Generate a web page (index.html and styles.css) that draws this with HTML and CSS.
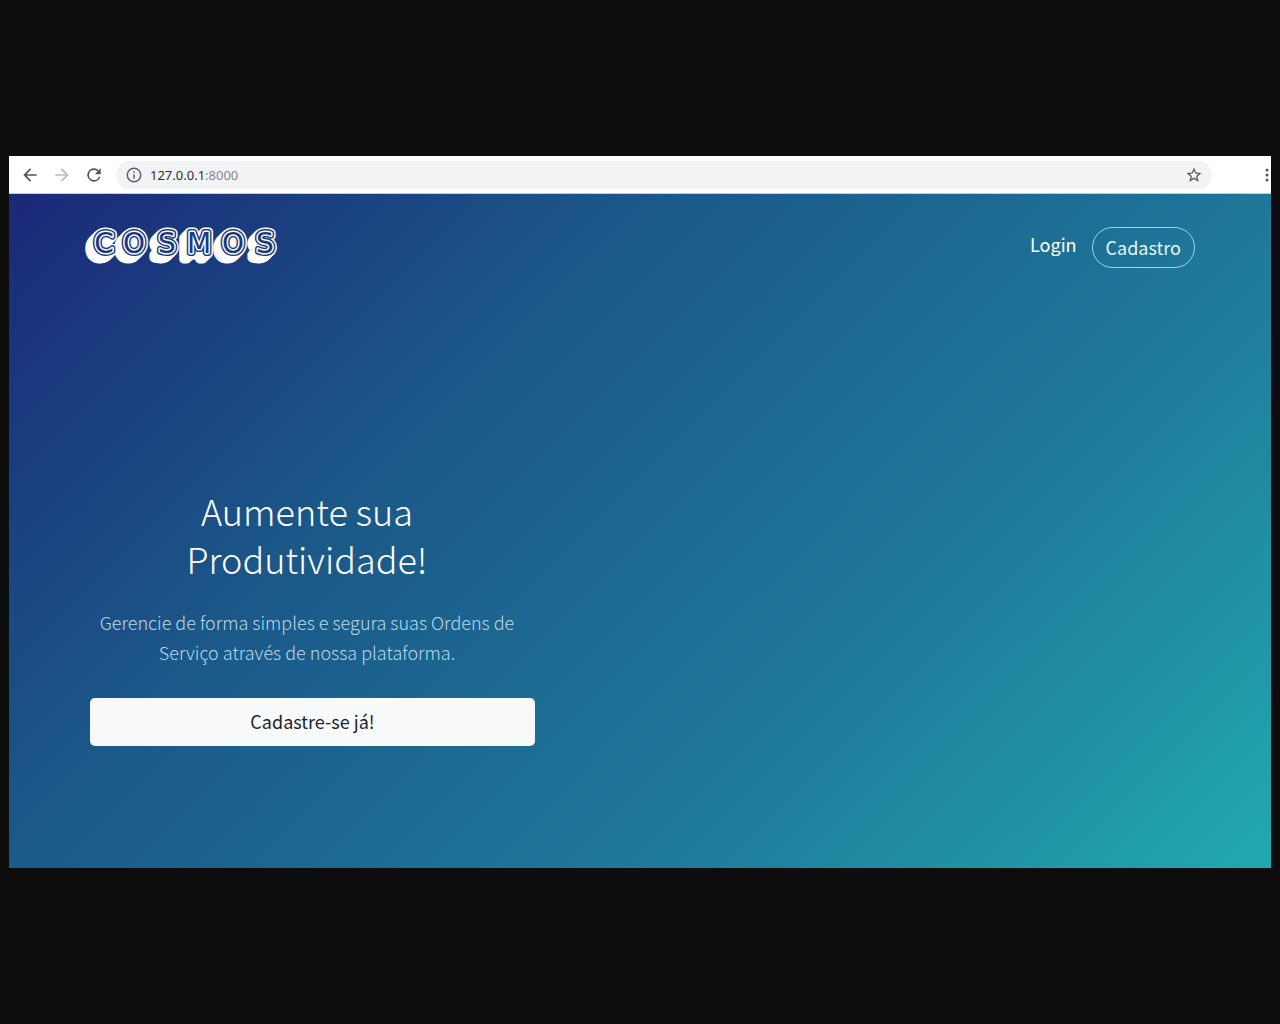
FILE: index.html
```html
<!DOCTYPE html>
<html lang="pt-BR">
<head>
<meta charset="utf-8">
<meta name="viewport" content="width=device-width, initial-scale=1">
<title>Cosmos</title>
<link rel="stylesheet" href="styles.css">
</head>
<body>
<div class="browser">
  <div class="toolbar">
    <button class="tool" type="button" aria-label="Voltar"><svg viewBox="0 0 24 24"><path d="M20 11H7.800l5.600-5.600L12 4l-8 8 8 8 1.400-1.400L7.800 13H20z"/></svg></button>
    <button class="tool tool-off" type="button" aria-label="Avançar"><svg viewBox="0 0 24 24"><path d="M4 11h12.200l-5.600-5.600L12 4l8 8-8 8-1.400-1.400 5.600-5.600H4z"/></svg></button>
    <button class="tool" type="button" aria-label="Recarregar"><svg viewBox="0 0 24 24"><path d="M17.650 6.350A8 8 0 1 0 19.730 14h-2.080A6 6 0 1 1 12 6c1.660 0 3.140.69 4.220 1.780L13 11h7V4z"/></svg></button>
    <div class="address">
      <svg class="info" viewBox="0 0 24 24"><path d="M11 7h2v2h-2zm0 4h2v6h-2zm1-9a10 10 0 1 0 0 20 10 10 0 0 0 0-20zm0 18a8 8 0 1 1 0-16 8 8 0 0 1 0 16z"/></svg>
      <span class="url">127.0.0.1<span class="port">:8000</span></span>
      <button class="tool star" type="button" aria-label="Favoritar"><svg viewBox="0 0 24 24"><path d="M22 9.240l-7.190-.62L12 2 9.190 8.630 2 9.240l5.460 4.730L5.820 21 12 17.270 18.180 21l-1.630-7.030zM12 15.400l-3.760 2.270 1-4.280-3.320-2.880 4.380-.38L12 6.100l1.710 4.040 4.380.38-3.320 2.880 1 4.280z"/></svg></button>
    </div>
    <button class="menu" type="button" aria-label="Menu"><svg viewBox="0 0 4 16"><circle cx="2" cy="3" r="1.500"/><circle cx="2" cy="8" r="1.500"/><circle cx="2" cy="13" r="1.500"/></svg></button>
  </div>
  <div class="page">
    <header class="header">
      <a class="logo" href="#" aria-label="Cosmos">
        <svg viewBox="0 0 196 40">
          <defs>
            <text id="word" y="27" x="19 49 82 114 148 180" text-anchor="middle">COSMOS</text>
            <g id="mass" class="mass">
              <use href="#word"/>
            </g>
          </defs>
          <use href="#mass" x="-6" y="6"/>
          <use href="#mass" x="-5" y="5"/>
          <use href="#mass" x="-4" y="4"/>
          <use href="#mass" x="-3" y="3"/>
          <use href="#mass" x="-2" y="2"/>
          <use href="#mass" x="-1" y="1"/>
          <use href="#mass"/>
          <use class="edge" href="#word"/>
          <use class="inline" href="#word"/>
          <use class="core" href="#word"/>
        </svg>
      </a>
      <nav class="nav">
        <a class="login" href="#">Login</a>
        <a class="signup" href="#">Cadastro</a>
      </nav>
    </header>
    <main class="hero">
      <h1 class="title">Aumente sua Produtividade!</h1>
      <p class="lead">Gerencie de forma simples e segura suas Ordens de Serviço através de nossa plataforma.</p>
      <button class="cta" type="button">Cadastre-se já!</button>
    </main>
  </div>
</div>
</body>
</html>
```
FILE: styles.css
```css
* { box-sizing: border-box; }
body {
  margin: 0;
  min-height: 100vh;
  padding: 0 9px;
  display: flex;
  flex-direction: column;
  justify-content: center;
  background: #0d0d0d;
  font-family: "Noto Sans CJK JP", "Noto Sans", sans-serif;
}
button { font-family: inherit; border: 0; padding: 0; cursor: pointer; }
a { text-decoration: none; }
svg { display: block; }

.toolbar {
  display: flex;
  align-items: center;
  height: 38px;
  padding-left: 11px;
  background: #fff;
  border-bottom: 1px solid #c9ccd0;
}
.tool { width: 20px; height: 20px; margin-right: 12px; background: none; fill: #505357; }
.tool-off { fill: #b9bbbd; }
.address {
  display: flex;
  align-items: center;
  flex: 1;
  height: 28px;
  padding: 0 8px 0 9px;
  border-radius: 14px;
  background: #f1f3f4;
}
.info { width: 18px; height: 18px; fill: #5f6368; margin-right: 7px; }
.url { flex: 1; font: 13px/20px "Noto Sans", sans-serif; color: #2b2d30; }
.port { color: #85898d; }
.star { width: 18px; height: 18px; margin: 0 1px 0 0; }
.star svg { width: 18px; }
.menu { width: 4px; height: 16px; margin: 0 2px 0 53px; background: none; fill: #505357; }

.page {
  min-height: 674px;
  padding: 32px 76px 122px;
  display: flex;
  flex-direction: column;
  background: linear-gradient(135deg, #1a2878 0%, #1b5888 33%, #1c6891 50%, #1f7c9c 70%, #21a9af 100%);
}
.header { display: flex; justify-content: space-between; align-items: flex-start; }
.logo svg { width: 196px; height: 40px; overflow: visible; font: 28px "DejaVu Sans", sans-serif; stroke-linejoin: round; }
.mass { fill: #fff; stroke: #fff; stroke-width: 9px; }
.edge { fill: #1a3a7c; stroke: #1a3a7c; stroke-width: 6px; }
.inline { fill: #fff; stroke: #fff; stroke-width: 3px; }
.core { fill: #1a3a7c; }
.nav { display: flex; align-items: flex-start; gap: 15px; font-size: 18px; line-height: 30px; }
.nav a { color: #fff; }
.login { padding-top: 3px; }
.nav .signup {
  margin-top: 1px;
  padding: 4px 13px 5px;
  border: 1px solid #a5d3e4;
  border-radius: 21px;
  color: #e6f6fb;
}

.hero { width: 445px; max-width: 100%; margin: auto 0 0 5px; text-align: center; }
.title {
  width: 300px;
  margin: 0 auto 25px 67px;
  font-size: 36px;
  line-height: 48px;
  font-weight: 300;
  color: #fff;
}
.lead {
  margin: 0 11px 31px 0;
  font-size: 18px;
  line-height: 30px;
  font-weight: 300;
  color: #b9d9ea;
}
.cta {
  width: 100%;
  height: 48px;
  padding-bottom: 2px;
  border-radius: 5px;
  background: #f8f9fa;
  color: #212529;
  font-size: 18px;
}
```
